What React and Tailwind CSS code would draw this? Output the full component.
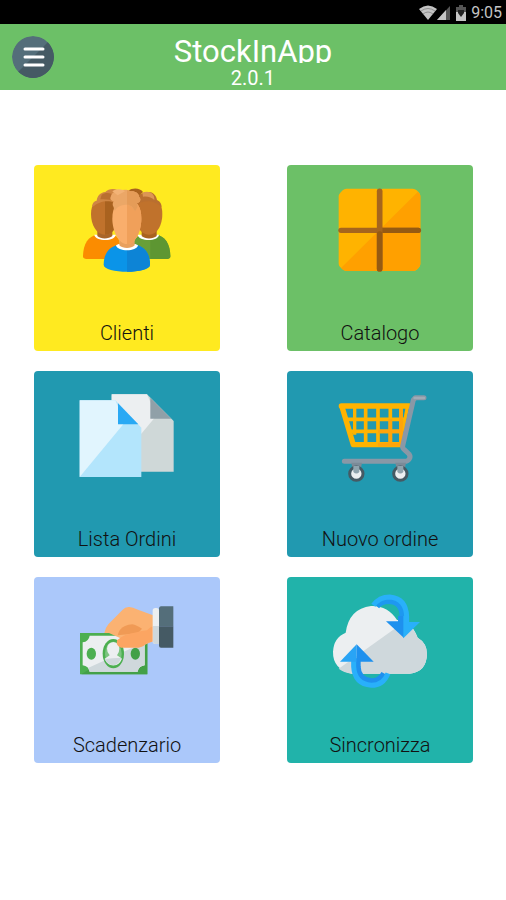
import React from 'react';

function ClientsIcon() {
  return (
    <>
      {/* left person */}
      <path d="M158 290c0-38 16-62 42-66h46c14 3 22 12 22 30v43h-94c-10 0-16-2-16-7z" fill="#fb8c00" />
      <path d="M192 224h64c-2 22-62 20-64 0z" fill="#fff" />
      <path d="M201 192h45v36c-10 10-36 10-45 0z" fill="#a9662a" />
      <path d="M182 162c0-30 14-44 42-44s40 14 40 44c0 32-14 62-40 62s-42-30-42-62z" fill="#c0722c" />
      <path d="M224 116c26 0 40 16 40 46 0 32-14 62-40 62z" fill="#a9621f" />
      <path d="M185 142c0-12 6-18 14-20 2-14 10-24 26-26 8-10 26-12 36-6l20 14-18 34c-10-16-46-24-78 4z" fill="#cf8644" />
      <path d="M214 104c12-8 28-6 40 4l-8 14c-10-4-24-4-36-4z" fill="#b96f30" />
      {/* right person */}
      <path d="M310 254c0-18 10-27 24-30h44c26 4 42 28 42 66 0 5-6 7-14 7h-96z" fill="#689f38" />
      <path d="M360 224h18c26 4 42 28 42 66 0 5-6 7-14 7h-46z" fill="#5d9632" />
      <path d="M322 224h64c-2 22-62 20-64 0z" fill="#fff" />
      <path d="M334 192h45v36c-10 10-36 10-45 0z" fill="#a9621f" />
      <path d="M314 162c0-30 14-44 42-44s40 14 40 44c0 32-14 62-40 62s-42-30-42-62z" fill="#c0722c" />
      <path d="M314 124c4-18 24-30 44-28 10 2 20 10 22 24 10 4 14 12 14 22-16-18-48-26-74-8z" fill="#b96f30" />
      <path d="M336 98c20-8 38 2 36 22-8-8-20-12-34-10z" fill="#dc9655" />
      <path d="M294 92c12-10 36-9 44 4l-20 18z" fill="#a9621f" />
      {/* front person */}
      <path d="M220 314c0-34 18-55 44-60h52c26 5 43 26 43 60 0 28-139 28-139 0z" fill="#0a94e8" />
      <path d="M290 254h26c26 5 43 26 43 60 0 14-35 21-69 21z" fill="#0d84d6" />
      <path d="M257 256l8-4h50l8 4c-4 20-62 20-66 0z" fill="#fff" />
      <path d="M267 222h46v34c-10 11-36 11-46 0z" fill="#e8a05f" />
      <path d="M246 176c0-34 14-58 44-58s43 24 43 58-16 76-43 76-44-42-44-76z" fill="#f9ae6c" />
      <path d="M290 118c30 0 43 24 43 58s-16 76-43 76z" fill="#f0a05a" />
      <path d="M250 142c-4-6-4-12 0-18-10-2-12-8-8-16 2-10 14-16 26-14 10-6 24-6 32 0 14-2 26 6 26 16 8 8 4 16-6 20 4 10-2 18-6 24-8-16-18-20-26-20s-26 2-34 18c-2-2-4-6-4-10z" fill="#eba767" />
      <path d="M290 91c4 0 8 2 10 3 14-2 26 6 26 16 8 8 4 16-6 20 4 10-2 18-6 24-6-14-14-20-24-20z" fill="#e59c58" />
      <path d="M246 94c10-9 30-8 38 0l-22 12z" fill="#f3b376" />
    </>
  );
}

function CatalogIcon() {
  return (
    <>
      <path d="M189 86h91l9 4 9-4h90q7 0 12 5l6 6q5 5 5 11v98l-3 4 3 4v98q0 6-5 11l-6 6q-5 4-12 4h-90l-9-4-9 4h-91q-6 0-11-5l-7-6q-5-5-5-11v-97l3-4-3-4v-98q0-5 5-10l7-7q5-5 11-5z" fill="#ffb300" />
      <path d="M404 95q7 6 7 13v98l-3 4 3 4v98q0 6-5 11l-6 6q-5 4-12 4h-90l-9-4-9 4h-91q-9 0-16-9z" fill="#ffa000" />
      <path d="M173 211h232" stroke="#a5651d" strokeWidth="16" strokeLinecap="round" />
      <path d="M289 211h116" stroke="#955a12" strokeWidth="16" strokeLinecap="round" />
      <path d="M289 94v232" stroke="#a5651d" strokeWidth="17" strokeLinecap="round" />
      <path d="M289 222v104" stroke="#955a12" strokeWidth="17" strokeLinecap="round" />
    </>
  );
}

function OrdersIcon() {
  return (
    <>
      <path d="M244 85h106l80 80v152H244z" fill="#cfd8d8" />
      <path d="M244 85h106l28 64-45 54-90 20z" fill="#eceff1" />
      <path d="M360 95l63 63h-63z" fill="#90a0a8" />
      <path d="M148 103h107l78 82v148H148z" fill="#b3e5fc" />
      <path d="M148 103h107l28 64-6 10-129 156z" fill="#e1f5fe" />
      <path d="M263 112l61 63h-61z" fill="#29a9f4" />
    </>
  );
}

function CartIcon() {
  return (
    <>
      <path d="M174 120h204" stroke="#ffb300" strokeWidth="16" strokeLinecap="round" />
      <path d="M176 122l34 114h146" fill="none" stroke="#ffb300" strokeWidth="16" strokeLinecap="round" strokeLinejoin="round" />
      <path d="M190 160h176M198 196h162M247 124v112M284 124v112M321 124v112M353 124v112" stroke="#ffb300" strokeWidth="11" />
      <path d="M214 124v82M372 124l-14 72" stroke="#ffb300" strokeWidth="10" />
      <path d="M284 196h76M321 160v76M353 130v106M284 236h72" stroke="#ffa40a" strokeWidth="11" />
      <path d="M422 95h-26l-6 7-32 138q-1 6 5 11l14 13q6 9 0 16-4 6-13 6H183" fill="none" stroke="#8998a6" strokeWidth="15" strokeLinecap="round" strokeLinejoin="round" />
      <path d="M394 96h28" stroke="#a0abb6" strokeWidth="8" strokeLinecap="round" />
      <path d="M204 290h32l-5 26h-22zM336 290h32l-5 26h-22z" fill="#7b8b98" />
      <circle cx="219" cy="323" r="20" fill="#eceff1" stroke="#455a64" strokeWidth="9" />
      <circle cx="351" cy="323" r="20" fill="#eceff1" stroke="#455a64" strokeWidth="9" />
      <path d="M210 300h18v18q-9 9-18 0zM342 300h18v18q-9 9-18 0z" fill="#90a4ae" />
    </>
  );
}

function PaymentsIcon() {
  return (
    <>
      <path d="M149 183h202v124H149z" fill="#4caf50" />
      <path d="M351 183v124H153z" fill="#43a047" />
      <path d="M178 191h144q2 18 21 20v69q-18 2-21 19H178q-3-17-21-19v-69q18-2 21-20z" fill="#eceff1" />
      <path d="M343 211v69q-18 2-21 19H178l-5-11z" fill="#cfd8dc" />
      <ellipse cx="183" cy="245" rx="14" ry="18" fill="#4caf50" />
      <ellipse cx="315" cy="245" rx="14" ry="18" fill="#43a047" />
      <ellipse cx="249" cy="245" rx="32" ry="44" fill="#4caf50" />
      <ellipse cx="249" cy="245" rx="25" ry="36" fill="#7cc480" />
      <path d="M249 210q18 2 18 20 0 12-7 20 8 6 15 10-8 20-26 20t-26-20q8-4 15-10-8-8-8-20 1-18 19-20z" fill="#eceff1" />
      <path d="M223 261l24-2 26-2q-8 22-24 23-18-1-26-19z" fill="#cfd8dc" />
      <path d="M222 183q2-14 12-26l43-44q8-9 20-8 12 1 22 7l49 18v78l-40 17-92-42z" fill="#fbb272" />
      <path d="M262 190q4-20 22-28 10-4 22-5 12 2 29 13l-12 14z" fill="#f09a55" />
      <path d="M260 205q-4 17 12 22h53q14-2 24-14l20-5v-45q-10 2-19 12-16 2-31 6-38 5-59 24z" fill="#fca562" />
      <rect x="367" y="108" width="19" height="108" rx="8" fill="#eceff1" />
      <path d="M368 162h18v54h-10q-8 0-8-8z" fill="#cfd8dc" />
      <path d="M386 108q1-5 6-5h37v60h-43z" fill="#546e7a" />
      <path d="M386 163h43v64h-37q-6 0-6-6z" fill="#455a64" />
    </>
  );
}

function SyncIcon() {
  return (
    <>
      <path d="M205 305q-57-14-56-66 2-42 38-57 10-72 76-80 50-2 78 42 40-4 62 53 28 16 28 50-2 54-52 58z" fill="#eceff1" />
      <path d="M166 290l188-134q36 3 49 41 28 16 28 50-2 54-52 58H205q-24-3-39-15z" fill="#cfd8dc" />
      {/* arrow down */}
      <path d="M278 101q14-17 38-17 43 0 45 48v22" fill="none" stroke="#1e98f0" strokeWidth="24" />
      <path d="M270 100q18-25 49-25 49 4 51 59v20" fill="none" stroke="#29b0fa" strokeWidth="15" />
      <path d="M308 148h36v-16h18v66z" fill="#1e90ee" />
      <path d="M360 132h17v18h33l-50 49z" fill="#29b0fa" />
      {/* arrow up */}
      <path d="M304 305q-14 25-40 25-42-4-43-46v-25" fill="none" stroke="#1e90ee" strokeWidth="22" />
      <path d="M314 304q-14 36-50 36-50-4-53-56v-25" fill="none" stroke="#29b0fa" strokeWidth="15" />
      <path d="M220 217v52h-50z" fill="#29a4f5" />
      <path d="M220 217l51 52h-51z" fill="#1e90ee" />
    </>
  );
}

const tiles = [
  { label: 'Clienti', color: 'bg-[#ffea20]', Icon: ClientsIcon },
  { label: 'Catalogo', color: 'bg-[#6cc067]', Icon: CatalogIcon },
  { label: 'Lista Ordini', color: 'bg-[#2199b0]', Icon: OrdersIcon },
  { label: 'Nuovo ordine', color: 'bg-[#2199b0]', Icon: CartIcon },
  { label: 'Scadenzario', color: 'bg-[#abc8fa]', Icon: PaymentsIcon },
  { label: 'Sincronizza', color: 'bg-[#21b3aa]', Icon: SyncIcon },
];

function StatusBar() {
  return (
    <div className="h-6 bg-black flex items-center justify-end gap-1 pt-px pr-1 text-[#c4c4c4]">
      <div className="flex items-center">
        <svg viewBox="0 0 18 15" className="w-[18px] h-[15px]" aria-hidden="true">
          <path d="M0 4q9-7 18 0L9 15z" fill="currentColor" />
          <path d="M2 6q7-5 14 0M4 9q5-4 10 0" fill="none" stroke="#777" strokeWidth="0.7" />
        </svg>
        <svg viewBox="0 0 14 15" className="w-[14px] h-[15px]" aria-hidden="true">
          <path d="M13 1v14H0z" fill="#555" />
          <path d="M9 5v10H0z" fill="currentColor" />
        </svg>
      </div>
      <svg viewBox="0 0 12 16" className="w-3 h-4" aria-hidden="true">
        <path d="M4 0h4v2h3v14H1V2h3z" fill="#555" />
        <path d="M1 7h10v9H1z" fill="currentColor" />
        <path d="M3 5h6v3L6 12 3 8z" fill="#222" />
      </svg>
      <span className="text-base leading-6">9:05</span>
    </div>
  );
}

function Header() {
  return (
    <header className="bg-[#6cc067] text-white grid grid-cols-[1fr_auto_1fr] items-center px-3">
      <button type="button" aria-label="Menu" className="w-[42px] h-[42px] rounded-full overflow-hidden">
        <svg viewBox="0 0 42 42" className="w-full h-full" aria-hidden="true">
          <circle cx="21" cy="21" r="21" fill="#546e7a" />
          <path d="M36 6A21 21 0 0 1 6 36z" fill="#455a64" />
          <path d="M13 13h18M13 21h18M13 29h18" stroke="#fff" strokeWidth="3" strokeLinecap="round" />
        </svg>
      </button>
      <div className="text-center pt-3">
        <h1 className="text-[31px] leading-8 h-[27px] overflow-hidden">StockInApp</h1>
        <p className="text-xl leading-6 mt-[3px]">2.0.1</p>
      </div>
    </header>
  );
}

export default function App() {
  return (
    <div className="min-h-screen bg-white font-['Roboto',sans-serif]">
      <StatusBar />
      <Header />
      <main className="grid grid-cols-2 gap-x-[67px] gap-y-5 pt-[75px] pl-[34px] pr-[33px]">
        {tiles.map(({ label, color, Icon }) => (
          <button
            key={label}
            type="button"
            className={`${color} aspect-square rounded flex flex-col items-center justify-between pt-[15px] pb-1 text-xl font-light leading-7 text-[#111]`}
          >
            <svg viewBox="140 60 300 300" className="w-[100px] h-[100px]" aria-hidden="true">
              <Icon />
            </svg>
            <span>{label}</span>
          </button>
        ))}
      </main>
    </div>
  );
}
